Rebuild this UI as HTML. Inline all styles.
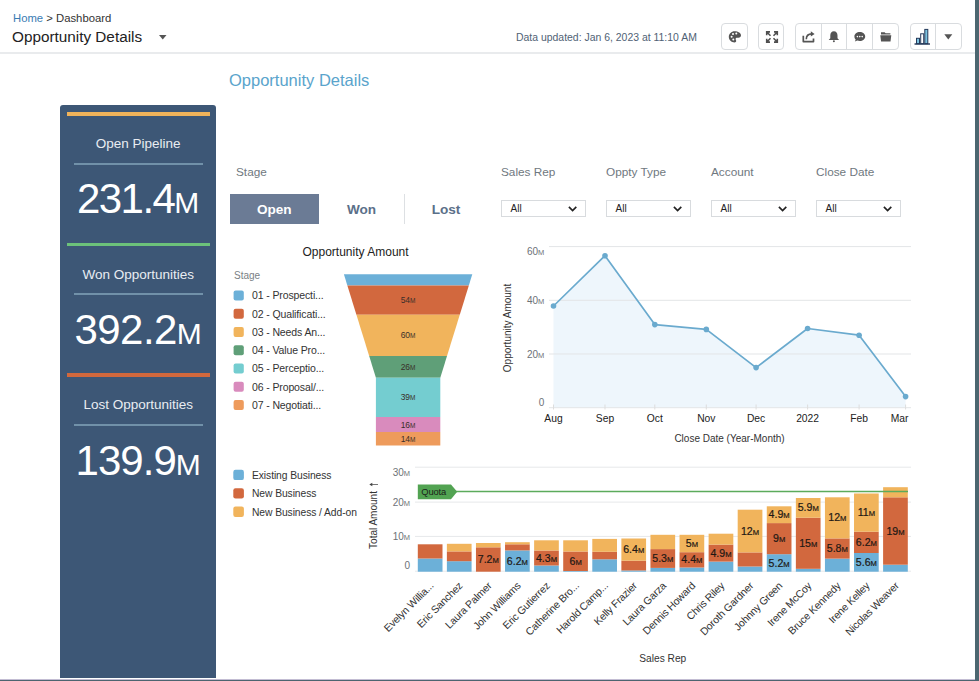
<!DOCTYPE html>
<html><head><meta charset="utf-8">
<style>
*{box-sizing:border-box;margin:0;padding:0}
html,body{width:979px;height:681px;overflow:hidden;background:#fff;font-family:"Liberation Sans",sans-serif}
.a{position:absolute;white-space:nowrap}
#rb{position:absolute;left:975px;top:0;width:4px;height:681px;background:#4c6670}
#bb{position:absolute;left:0;top:680px;width:979px;height:1px;background:#4d6470}
#bl{position:absolute;left:0;top:678.5px;width:975px;height:1.5px;background:#c3bdd3}
#hdrline{position:absolute;left:0;top:52px;width:975px;height:2px;background:#e9ebed}
.btn{position:absolute;top:23px;height:27px;border:1px solid #d9dcdf;border-radius:4px;background:#fff}
.sep{position:absolute;top:0;width:1px;height:25px;background:#d9dcdf}
#panel{position:absolute;left:60.2px;top:105px;width:156.2px;height:573px;background:#3d5776;border-radius:3px 3px 0 0}
.pbar{position:absolute;left:6.5px;width:143px;height:4px}
.ptitle{position:absolute;left:0;width:156px;text-align:center;color:#e9edf2;font-size:13.5px}
.pdiv{position:absolute;left:13.5px;width:129.5px;height:1.6px;background:#7191a9}
.pnum{position:absolute;left:0;width:156px;text-align:center;color:#fff;font-size:42px;letter-spacing:-1.3px}
.pnum span{font-size:30px;letter-spacing:0}
.flab{position:absolute;color:#6f7880;font-size:11.8px}
.dd{position:absolute;top:200px;width:85px;height:16.5px;border:1px solid #d8dbde;background:#fff}
.dd b{position:absolute;left:8.5px;top:1.6px;font-weight:normal;font-size:10px;color:#222}
.dd svg{position:absolute;left:66.3px;top:5.2px}
</style></head><body>
<div id="rb"></div>
<div id="bb"></div>
<div id="bl"></div>
<div id="hdrline"></div>

<!-- header -->
<div class="a" style="left:13px;top:12.3px;font-size:11.3px;color:#333"><span style="color:#3a7cb3">Home</span> &gt; Dashboard</div>
<div class="a" style="left:12px;top:28px;font-size:15.3px;color:#222">Opportunity Details</div>
<svg class="a" style="left:159px;top:34.5px" width="8" height="5"><path d="M0 0H7.5L3.75 4.6Z" fill="#555"/></svg>
<div class="a" style="left:516px;top:31.9px;font-size:10.45px;color:#506275">Data updated: Jan 6, 2023 at 11:10 AM</div>

<div class="btn" style="left:721px;width:27px"></div>
<div class="btn" style="left:757.5px;width:26.5px"></div>
<div class="btn" style="left:795px;width:104px">
  <div class="sep" style="left:24.8px"></div><div class="sep" style="left:50.2px"></div><div class="sep" style="left:75.8px"></div>
</div>
<div class="btn" style="left:909.5px;width:52px"><div class="sep" style="left:24.7px"></div></div>
<svg class="a" style="left:0;top:0" width="979" height="60">
 <!-- palette -->
 <path d="M734.6 31.2c-3.2 0-5.8 2.5-5.8 5.6s2.6 5.6 5.8 5.6c1 0 1.6-.6 1.6-1.4 0-.9-.6-1.2-.6-2 0-.8.7-1.3 1.5-1.3h1.3c1.6 0 2.6-1 2.6-2.4 0-2.3-2.8-4.1-6.4-4.1z" fill="#545454"/>
 <circle cx="731.6" cy="36.8" r="1" fill="#fff"/><circle cx="733" cy="34" r="1" fill="#fff"/><circle cx="736.3" cy="33.6" r="1" fill="#fff"/><circle cx="733.3" cy="39.6" r="1" fill="#fff"/>
 <!-- expand -->
 <g stroke="#4f4f4f" stroke-width="1.6" fill="none">
  <path d="M767.3 32.5L770.5 35.7M766.7 35.2V31.9H770M776.7 32.5L773.5 35.7M777.3 35.2V31.9H774M767.3 41.5L770.5 38.3M766.7 38.8V42.1H770M776.7 41.5L773.5 38.3M777.3 38.8V42.1H774"/>
 </g>
 <!-- share -->
 <path d="M803.3 35.8V41.6H813.5V38.6" stroke="#545454" stroke-width="1.7" fill="none" stroke-linejoin="round"/>
 <path d="M806.3 39.2c0-3.6 2.2-5.3 5.6-5.3" stroke="#545454" stroke-width="1.6" fill="none"/>
 <path d="M810.8 31.2L814.6 33.9L810.8 36.6Z" fill="#545454"/>
 <!-- bell -->
 <path d="M833.9 31.2c-2.3 0-3.6 1.8-3.6 4.2v2.8l-1.6 1.8h10.4l-1.6-1.8v-2.8c0-2.4-1.3-4.2-3.6-4.2z" fill="#545454"/>
 <circle cx="833.9" cy="41.2" r="1" fill="#545454"/>
 <!-- chat -->
 <path d="M859.8 32c-3 0-5.4 2-5.4 4.5 0 1.2.5 2.3 1.3 3.1l-.8 2 2.4-1c.8.3 1.6.5 2.5.5 3 0 5.4-2 5.4-4.6S862.8 32 859.8 32z" fill="#545454"/>
 <circle cx="857.4" cy="36.6" r=".8" fill="#fff"/><circle cx="859.8" cy="36.6" r=".8" fill="#fff"/><circle cx="862.2" cy="36.6" r=".8" fill="#fff"/>
 <!-- folder -->
 <path d="M881 32.2h3.6l1 1h4.8v1.2h-9.4z" fill="#545454"/>
 <path d="M880.3 35.2h11l-.8 6.3h-9.4z" fill="#545454"/>
 <!-- chart -->
 <rect x="916.5" y="38.3" width="3" height="5.4" fill="#7cc3e0" stroke="#24395a" stroke-width="1"/>
 <rect x="920.7" y="33.8" width="3" height="9.9" fill="#fff" stroke="#24395a" stroke-width="1"/>
 <rect x="924.8" y="29.4" width="3" height="14.3" fill="#7cc3e0" stroke="#24395a" stroke-width="1"/>
 <rect x="914.5" y="43.3" width="15.5" height="1.4" fill="#24395a"/>
 <path d="M944.3 34.2H952.3L948.3 39.6Z" fill="#555"/>
</svg>

<!-- title -->
<div class="a" style="left:229px;top:71px;font-size:16.5px;color:#5aa4cc">Opportunity Details</div>

<!-- left panel -->
<div id="panel">
  <div class="pbar" style="top:7px;background:#f0b35a"></div>
  <div class="ptitle" style="top:31px">Open Pipeline</div>
  <div class="pdiv" style="top:58.1px"></div>
  <div class="pnum" style="top:69.5px;letter-spacing:-1.55px">231.4<span>M</span></div>
  <div class="pbar" style="top:137.5px;background:#6cc27a;height:3.5px"></div>
  <div class="ptitle" style="top:161.7px">Won Opportunities</div>
  <div class="pdiv" style="top:188.1px"></div>
  <div class="pnum" style="top:200.5px;letter-spacing:-0.55px">392.2<span>M</span></div>
  <div class="pbar" style="top:268px;background:#d2683c;height:3.5px"></div>
  <div class="ptitle" style="top:292px">Lost Opportunities</div>
  <div class="pdiv" style="top:319.1px"></div>
  <div class="pnum" style="top:331.5px;letter-spacing:-0.95px">139.9<span>M</span></div>
</div>

<!-- filters -->
<div class="flab" style="left:236px;top:165px">Stage</div>
<div class="a" style="left:229.5px;top:194px;width:89.5px;height:30px;background:#6b7b95"></div>
<div class="a" style="left:229.5px;top:202px;width:89.5px;text-align:center;font-weight:bold;font-size:13.6px;color:#fff">Open</div>
<div class="a" style="left:319px;top:202px;width:85px;text-align:center;font-weight:bold;font-size:13.6px;color:#5b7089">Won</div>
<div class="a" style="left:404px;top:194px;width:1px;height:30px;background:#dde0e3"></div>
<div class="a" style="left:405px;top:202px;width:82px;text-align:center;font-weight:bold;font-size:13.6px;color:#5b7089">Lost</div>

<div class="flab" style="left:501px;top:165px">Sales Rep</div>
<div class="flab" style="left:606px;top:165px">Oppty Type</div>
<div class="flab" style="left:711px;top:165px">Account</div>
<div class="flab" style="left:816px;top:165px">Close Date</div>
<div class="dd" style="left:501px"><b>All</b><svg width="10" height="6"><path d="M0.9 0.9L4.6 4.5L8.3 0.9" stroke="#222" stroke-width="1.7" fill="none"/></svg></div>
<div class="dd" style="left:606px"><b>All</b><svg width="10" height="6"><path d="M0.9 0.9L4.6 4.5L8.3 0.9" stroke="#222" stroke-width="1.7" fill="none"/></svg></div>
<div class="dd" style="left:711px"><b>All</b><svg width="10" height="6"><path d="M0.9 0.9L4.6 4.5L8.3 0.9" stroke="#222" stroke-width="1.7" fill="none"/></svg></div>
<div class="dd" style="left:816px"><b>All</b><svg width="10" height="6"><path d="M0.9 0.9L4.6 4.5L8.3 0.9" stroke="#222" stroke-width="1.7" fill="none"/></svg></div>

<!-- CHARTS -->
<svg class="a" style="left:0;top:0" width="979" height="681" font-family="Liberation Sans, sans-serif">
<path d="M343.90 274.2L472.30 274.2L468.84 285.4L347.36 285.4Z" fill="#6cb0d8"/>
<path d="M347.36 285.4L468.84 285.4L459.78 314.7L356.42 314.7Z" fill="#d2683e"/>
<text x="408.1" y="303.0" font-size="8.5" text-anchor="middle" fill="#3a2f2a">54<tspan font-size="6.5">M</tspan></text>
<path d="M356.42 314.7L459.78 314.7L447.01 356L369.19 356Z" fill="#f1b45c"/>
<text x="408.1" y="338.4" font-size="8.5" text-anchor="middle" fill="#3a2f2a">60<tspan font-size="6.5">M</tspan></text>
<path d="M369.19 356L447.01 356L440.30 377.7L375.90 377.7Z" fill="#5f9f78"/>
<text x="408.1" y="369.9" font-size="8.5" text-anchor="middle" fill="#3a2f2a">26<tspan font-size="6.5">M</tspan></text>
<path d="M375.90 377.7L440.30 377.7L440.30 417L375.90 417Z" fill="#74cdd0"/>
<text x="408.1" y="400.4" font-size="8.5" text-anchor="middle" fill="#3a2f2a">39<tspan font-size="6.5">M</tspan></text>
<path d="M375.90 417L440.30 417L440.30 432L375.90 432Z" fill="#d98bbd"/>
<text x="408.1" y="427.5" font-size="8.5" text-anchor="middle" fill="#3a2f2a">16<tspan font-size="6.5">M</tspan></text>
<path d="M375.90 432L440.30 432L440.30 445.6L375.90 445.6Z" fill="#ee9b5c"/>
<text x="408.1" y="441.8" font-size="8.5" text-anchor="middle" fill="#3a2f2a">14<tspan font-size="6.5">M</tspan></text>
<text x="302.5" y="256" font-size="12" fill="#222">Opportunity Amount</text>
<text x="234" y="278.5" font-size="10" fill="#7a7f85">Stage</text>
<rect x="233.6" y="290.4" width="10.2" height="10" rx="2" fill="#6cb0d8"/>
<text x="252" y="299.2" font-size="10.5" letter-spacing="-0.12" fill="#333">01 - Prospecti...</text>
<rect x="233.6" y="308.7" width="10.2" height="10" rx="2" fill="#d2683e"/>
<text x="252" y="317.5" font-size="10.5" letter-spacing="-0.12" fill="#333">02 - Qualificati...</text>
<rect x="233.6" y="326.9" width="10.2" height="10" rx="2" fill="#f1b45c"/>
<text x="252" y="335.7" font-size="10.5" letter-spacing="-0.12" fill="#333">03 - Needs An...</text>
<rect x="233.6" y="345.2" width="10.2" height="10" rx="2" fill="#5f9f78"/>
<text x="252" y="354.0" font-size="10.5" letter-spacing="-0.12" fill="#333">04 - Value Pro...</text>
<rect x="233.6" y="363.5" width="10.2" height="10" rx="2" fill="#74cdd0"/>
<text x="252" y="372.3" font-size="10.5" letter-spacing="-0.12" fill="#333">05 - Perceptio...</text>
<rect x="233.6" y="381.8" width="10.2" height="10" rx="2" fill="#d98bbd"/>
<text x="252" y="390.6" font-size="10.5" letter-spacing="-0.12" fill="#333">06 - Proposal/...</text>
<rect x="233.6" y="400.0" width="10.2" height="10" rx="2" fill="#ee9b5c"/>
<text x="252" y="408.8" font-size="10.5" letter-spacing="-0.12" fill="#333">07 - Negotiati...</text>
<text x="544.3" y="254.6" font-size="10" text-anchor="end" fill="#6d7277">60<tspan font-size="7.5">M</tspan></text>
<text x="544.3" y="304.2" font-size="10" text-anchor="end" fill="#6d7277">40<tspan font-size="7.5">M</tspan></text>
<text x="544.3" y="357.9" font-size="10" text-anchor="end" fill="#6d7277">20<tspan font-size="7.5">M</tspan></text>
<text x="544.3" y="405.8" font-size="10" text-anchor="end" fill="#6d7277">0</text>
<polygon points="553.5,407.7 553.5,306.0 605.0,255.7 654.8,324.6 706.3,329.4 756.1,367.6 807.6,328.5 859.1,335.2 905.6,396.6 905.6,407.7" fill="#eef6fc"/>
<line x1="549" y1="246.6" x2="911" y2="246.6" stroke="#e3e5e7" stroke-width="1"/>
<line x1="549" y1="300.3" x2="911" y2="300.3" stroke="#e3e5e7" stroke-width="1"/>
<line x1="549" y1="354.0" x2="911" y2="354.0" stroke="#e3e5e7" stroke-width="1"/>
<line x1="549" y1="407.7" x2="911" y2="407.7" stroke="#e3e5e7" stroke-width="1"/>
<polyline points="553.5,306.0 605.0,255.7 654.8,324.6 706.3,329.4 756.1,367.6 807.6,328.5 859.1,335.2 905.6,396.6" fill="none" stroke="#6aaace" stroke-width="1.7" stroke-linejoin="round"/>
<circle cx="553.5" cy="306.0" r="2.8" fill="#6aaace"/>
<circle cx="605.0" cy="255.7" r="2.8" fill="#6aaace"/>
<circle cx="654.8" cy="324.6" r="2.8" fill="#6aaace"/>
<circle cx="706.3" cy="329.4" r="2.8" fill="#6aaace"/>
<circle cx="756.1" cy="367.6" r="2.8" fill="#6aaace"/>
<circle cx="807.6" cy="328.5" r="2.8" fill="#6aaace"/>
<circle cx="859.1" cy="335.2" r="2.8" fill="#6aaace"/>
<circle cx="905.6" cy="396.6" r="2.8" fill="#6aaace"/>
<line x1="553.5" y1="404.5" x2="553.5" y2="409.5" stroke="#ddd" stroke-width="1"/>
<text x="553.5" y="422" font-size="10.3" text-anchor="middle" fill="#222">Aug</text>
<line x1="605.0" y1="404.5" x2="605.0" y2="409.5" stroke="#ddd" stroke-width="1"/>
<text x="605.0" y="422" font-size="10.3" text-anchor="middle" fill="#222">Sep</text>
<line x1="654.8" y1="404.5" x2="654.8" y2="409.5" stroke="#ddd" stroke-width="1"/>
<text x="654.8" y="422" font-size="10.3" text-anchor="middle" fill="#222">Oct</text>
<line x1="706.3" y1="404.5" x2="706.3" y2="409.5" stroke="#ddd" stroke-width="1"/>
<text x="706.3" y="422" font-size="10.3" text-anchor="middle" fill="#222">Nov</text>
<line x1="756.1" y1="404.5" x2="756.1" y2="409.5" stroke="#ddd" stroke-width="1"/>
<text x="756.1" y="422" font-size="10.3" text-anchor="middle" fill="#222">Dec</text>
<line x1="807.6" y1="404.5" x2="807.6" y2="409.5" stroke="#ddd" stroke-width="1"/>
<text x="807.6" y="422" font-size="10.3" text-anchor="middle" fill="#222">2022</text>
<line x1="859.1" y1="404.5" x2="859.1" y2="409.5" stroke="#ddd" stroke-width="1"/>
<text x="859.1" y="422" font-size="10.3" text-anchor="middle" fill="#222">Feb</text>
<line x1="905.6" y1="404.5" x2="905.6" y2="409.5" stroke="#ddd" stroke-width="1"/>
<text x="899.5" y="422" font-size="10.3" text-anchor="middle" fill="#222">Mar</text>
<text x="729.5" y="441.5" font-size="10" text-anchor="middle" fill="#333">Close Date (Year-Month)</text>
<text transform="translate(510.5,328) rotate(-90)" font-size="10" text-anchor="middle" fill="#333">Opportunity Amount</text>
<line x1="415" y1="467.2" x2="911" y2="467.2" stroke="#e6e8ea" stroke-width="1"/>
<text x="410" y="475.7" font-size="10" text-anchor="end" fill="#6d7277">30<tspan font-size="7.5">M</tspan></text>
<line x1="415" y1="502.1" x2="911" y2="502.1" stroke="#e6e8ea" stroke-width="1"/>
<text x="410" y="506.0" font-size="10" text-anchor="end" fill="#6d7277">20<tspan font-size="7.5">M</tspan></text>
<line x1="415" y1="536.4" x2="911" y2="536.4" stroke="#e6e8ea" stroke-width="1"/>
<text x="410" y="540.3" font-size="10" text-anchor="end" fill="#6d7277">10<tspan font-size="7.5">M</tspan></text>
<line x1="415" y1="571.2" x2="911" y2="571.2" stroke="#e6e8ea" stroke-width="1"/>
<text x="410" y="569.3" font-size="10" text-anchor="end" fill="#6d7277">0</text>
<text transform="translate(376.5,520) rotate(-90)" font-size="10" text-anchor="middle" fill="#333">Total Amount</text>
<path d="M371 484.5H378" stroke="#666" stroke-width="0.9" fill="none"/><path d="M369.3 484.5L372.3 482.8V486.2Z" fill="#444"/>
<rect x="417.80" y="558.50" width="24.7" height="13.20" fill="#6cb0d8"/>
<rect x="417.80" y="544.30" width="24.7" height="14.20" fill="#d2683e"/>
<text transform="translate(434.2,586.4) rotate(-45)" font-size="10.5" letter-spacing="-0.2" text-anchor="end" fill="#333">Evelyn Willia...</text>
<rect x="446.88" y="561.20" width="24.7" height="10.50" fill="#6cb0d8"/>
<rect x="446.88" y="551.40" width="24.7" height="9.80" fill="#d2683e"/>
<rect x="446.88" y="543.80" width="24.7" height="7.60" fill="#f1b45c"/>
<text transform="translate(463.2,586.4) rotate(-45)" font-size="10.5" letter-spacing="-0.2" text-anchor="end" fill="#333">Eric Sanchez</text>
<rect x="475.96" y="547.30" width="24.7" height="24.40" fill="#d2683e"/>
<rect x="475.96" y="543.00" width="24.7" height="4.30" fill="#f1b45c"/>
<text x="488.3" y="563.0" font-size="10.6" text-anchor="middle" fill="#1e1814" stroke="#1e1814" stroke-width="0.2">7.2<tspan font-size="7.6">M</tspan></text>
<text transform="translate(492.3,586.4) rotate(-45)" font-size="10.5" letter-spacing="-0.2" text-anchor="end" fill="#333">Laura Palmer</text>
<rect x="505.04" y="550.40" width="24.7" height="21.30" fill="#6cb0d8"/>
<rect x="505.04" y="544.30" width="24.7" height="6.10" fill="#d2683e"/>
<rect x="505.04" y="542.20" width="24.7" height="2.10" fill="#f1b45c"/>
<text x="517.4" y="564.5" font-size="10.6" text-anchor="middle" fill="#1e1814" stroke="#1e1814" stroke-width="0.2">6.2<tspan font-size="7.6">M</tspan></text>
<text transform="translate(521.4,586.4) rotate(-45)" font-size="10.5" letter-spacing="-0.2" text-anchor="end" fill="#333">John Williams</text>
<rect x="534.12" y="565.50" width="24.7" height="6.20" fill="#6cb0d8"/>
<rect x="534.12" y="550.50" width="24.7" height="15.00" fill="#d2683e"/>
<rect x="534.12" y="540.30" width="24.7" height="10.20" fill="#f1b45c"/>
<text x="546.5" y="561.5" font-size="10.6" text-anchor="middle" fill="#1e1814" stroke="#1e1814" stroke-width="0.2">4.3<tspan font-size="7.6">M</tspan></text>
<text transform="translate(550.5,586.4) rotate(-45)" font-size="10.5" letter-spacing="-0.2" text-anchor="end" fill="#333">Eric Gutierrez</text>
<rect x="563.21" y="571.00" width="24.7" height="0.70" fill="#6cb0d8"/>
<rect x="563.21" y="551.50" width="24.7" height="19.50" fill="#d2683e"/>
<rect x="563.21" y="540.30" width="24.7" height="11.20" fill="#f1b45c"/>
<text x="575.6" y="564.8" font-size="10.6" text-anchor="middle" fill="#1e1814" stroke="#1e1814" stroke-width="0.2">6<tspan font-size="7.6">M</tspan></text>
<text transform="translate(579.6,586.4) rotate(-45)" font-size="10.5" letter-spacing="-0.2" text-anchor="end" fill="#333">Catherine Bro...</text>
<rect x="592.29" y="559.30" width="24.7" height="12.40" fill="#6cb0d8"/>
<rect x="592.29" y="551.80" width="24.7" height="7.50" fill="#d2683e"/>
<rect x="592.29" y="538.90" width="24.7" height="12.90" fill="#f1b45c"/>
<text transform="translate(608.6,586.4) rotate(-45)" font-size="10.5" letter-spacing="-0.2" text-anchor="end" fill="#333">Harold Camp...</text>
<rect x="621.37" y="570.50" width="24.7" height="1.20" fill="#6cb0d8"/>
<rect x="621.37" y="560.70" width="24.7" height="9.80" fill="#d2683e"/>
<rect x="621.37" y="538.50" width="24.7" height="22.20" fill="#f1b45c"/>
<text x="633.7" y="553.1" font-size="10.6" text-anchor="middle" fill="#1e1814" stroke="#1e1814" stroke-width="0.2">6.4<tspan font-size="7.6">M</tspan></text>
<text transform="translate(637.7,586.4) rotate(-45)" font-size="10.5" letter-spacing="-0.2" text-anchor="end" fill="#333">Kelly Frazier</text>
<rect x="650.45" y="567.90" width="24.7" height="3.80" fill="#6cb0d8"/>
<rect x="650.45" y="549.10" width="24.7" height="18.80" fill="#d2683e"/>
<rect x="650.45" y="534.80" width="24.7" height="14.30" fill="#f1b45c"/>
<text x="662.8" y="562.0" font-size="10.6" text-anchor="middle" fill="#1e1814" stroke="#1e1814" stroke-width="0.2">5.3<tspan font-size="7.6">M</tspan></text>
<text transform="translate(666.8,586.4) rotate(-45)" font-size="10.5" letter-spacing="-0.2" text-anchor="end" fill="#333">Laura Garza</text>
<rect x="679.53" y="567.50" width="24.7" height="4.20" fill="#6cb0d8"/>
<rect x="679.53" y="552.20" width="24.7" height="15.30" fill="#d2683e"/>
<rect x="679.53" y="534.80" width="24.7" height="17.40" fill="#f1b45c"/>
<text x="691.9" y="547.0" font-size="10.6" text-anchor="middle" fill="#1e1814" stroke="#1e1814" stroke-width="0.2">5<tspan font-size="7.6">M</tspan></text>
<text x="691.9" y="563.4" font-size="10.6" text-anchor="middle" fill="#1e1814" stroke="#1e1814" stroke-width="0.2">4.4<tspan font-size="7.6">M</tspan></text>
<text transform="translate(695.9,586.4) rotate(-45)" font-size="10.5" letter-spacing="-0.2" text-anchor="end" fill="#333">Dennis Howard</text>
<rect x="708.61" y="561.60" width="24.7" height="10.10" fill="#6cb0d8"/>
<rect x="708.61" y="544.60" width="24.7" height="17.00" fill="#d2683e"/>
<rect x="708.61" y="533.70" width="24.7" height="10.90" fill="#f1b45c"/>
<text x="721.0" y="556.6" font-size="10.6" text-anchor="middle" fill="#1e1814" stroke="#1e1814" stroke-width="0.2">4.9<tspan font-size="7.6">M</tspan></text>
<text transform="translate(725.0,586.4) rotate(-45)" font-size="10.5" letter-spacing="-0.2" text-anchor="end" fill="#333">Chris Riley</text>
<rect x="737.69" y="566.50" width="24.7" height="5.20" fill="#6cb0d8"/>
<rect x="737.69" y="552.40" width="24.7" height="14.10" fill="#d2683e"/>
<rect x="737.69" y="509.70" width="24.7" height="42.70" fill="#f1b45c"/>
<text x="750.0" y="534.5" font-size="10.6" text-anchor="middle" fill="#1e1814" stroke="#1e1814" stroke-width="0.2">12<tspan font-size="7.6">M</tspan></text>
<text transform="translate(754.0,586.4) rotate(-45)" font-size="10.5" letter-spacing="-0.2" text-anchor="end" fill="#333">Doroth Gardner</text>
<rect x="766.78" y="554.20" width="24.7" height="17.50" fill="#6cb0d8"/>
<rect x="766.78" y="523.10" width="24.7" height="31.10" fill="#d2683e"/>
<rect x="766.78" y="506.30" width="24.7" height="16.80" fill="#f1b45c"/>
<text x="779.1" y="518.2" font-size="10.6" text-anchor="middle" fill="#1e1814" stroke="#1e1814" stroke-width="0.2">4.9<tspan font-size="7.6">M</tspan></text>
<text x="779.1" y="542.2" font-size="10.6" text-anchor="middle" fill="#1e1814" stroke="#1e1814" stroke-width="0.2">9<tspan font-size="7.6">M</tspan></text>
<text x="779.1" y="566.5" font-size="10.6" text-anchor="middle" fill="#1e1814" stroke="#1e1814" stroke-width="0.2">5.2<tspan font-size="7.6">M</tspan></text>
<text transform="translate(783.1,586.4) rotate(-45)" font-size="10.5" letter-spacing="-0.2" text-anchor="end" fill="#333">Johnny Green</text>
<rect x="795.86" y="568.80" width="24.7" height="2.90" fill="#6cb0d8"/>
<rect x="795.86" y="517.70" width="24.7" height="51.10" fill="#d2683e"/>
<rect x="795.86" y="498.00" width="24.7" height="19.70" fill="#f1b45c"/>
<text x="808.2" y="511.4" font-size="10.6" text-anchor="middle" fill="#1e1814" stroke="#1e1814" stroke-width="0.2">5.9<tspan font-size="7.6">M</tspan></text>
<text x="808.2" y="546.8" font-size="10.6" text-anchor="middle" fill="#1e1814" stroke="#1e1814" stroke-width="0.2">15<tspan font-size="7.6">M</tspan></text>
<text transform="translate(812.2,586.4) rotate(-45)" font-size="10.5" letter-spacing="-0.2" text-anchor="end" fill="#333">Irene McCoy</text>
<rect x="824.94" y="558.60" width="24.7" height="13.10" fill="#6cb0d8"/>
<rect x="824.94" y="538.40" width="24.7" height="20.20" fill="#d2683e"/>
<rect x="824.94" y="497.30" width="24.7" height="41.10" fill="#f1b45c"/>
<text x="837.3" y="521.4" font-size="10.6" text-anchor="middle" fill="#1e1814" stroke="#1e1814" stroke-width="0.2">12<tspan font-size="7.6">M</tspan></text>
<text x="837.3" y="552.0" font-size="10.6" text-anchor="middle" fill="#1e1814" stroke="#1e1814" stroke-width="0.2">5.8<tspan font-size="7.6">M</tspan></text>
<text transform="translate(841.3,586.4) rotate(-45)" font-size="10.5" letter-spacing="-0.2" text-anchor="end" fill="#333">Bruce Kennedy</text>
<rect x="854.02" y="553.00" width="24.7" height="18.70" fill="#6cb0d8"/>
<rect x="854.02" y="531.70" width="24.7" height="21.30" fill="#d2683e"/>
<rect x="854.02" y="493.50" width="24.7" height="38.20" fill="#f1b45c"/>
<text x="866.4" y="516.1" font-size="10.6" text-anchor="middle" fill="#1e1814" stroke="#1e1814" stroke-width="0.2">11<tspan font-size="7.6">M</tspan></text>
<text x="866.4" y="545.9" font-size="10.6" text-anchor="middle" fill="#1e1814" stroke="#1e1814" stroke-width="0.2">6.2<tspan font-size="7.6">M</tspan></text>
<text x="866.4" y="565.9" font-size="10.6" text-anchor="middle" fill="#1e1814" stroke="#1e1814" stroke-width="0.2">5.6<tspan font-size="7.6">M</tspan></text>
<text transform="translate(870.4,586.4) rotate(-45)" font-size="10.5" letter-spacing="-0.2" text-anchor="end" fill="#333">Irene Kelley</text>
<rect x="883.10" y="564.70" width="24.7" height="7.00" fill="#6cb0d8"/>
<rect x="883.10" y="497.30" width="24.7" height="67.40" fill="#d2683e"/>
<rect x="883.10" y="487.20" width="24.7" height="10.10" fill="#f1b45c"/>
<text x="895.5" y="534.5" font-size="10.6" text-anchor="middle" fill="#1e1814" stroke="#1e1814" stroke-width="0.2">19<tspan font-size="7.6">M</tspan></text>
<text transform="translate(899.5,586.4) rotate(-45)" font-size="10.5" letter-spacing="-0.2" text-anchor="end" fill="#333">Nicolas Weaver</text>
<line x1="440" y1="491.6" x2="908" y2="491.6" stroke="#5cab5c" stroke-width="1.5"/>
<path d="M417.8 484.5H451L457.2 491.8L451 499.2H417.8Z" fill="#52a352"/>
<text x="421.2" y="495.3" font-size="9.4" letter-spacing="-0.1" fill="#1a231a">Quota</text>
<text x="662.8" y="662.4" font-size="10.2" text-anchor="middle" fill="#333">Sales Rep</text>
<rect x="233.3" y="469.8" width="10.6" height="10.3" rx="2.2" fill="#6cb0d8"/>
<text x="252" y="478.9" font-size="10.3" letter-spacing="-0.08" fill="#333">Existing Business</text>
<rect x="233.3" y="488.2" width="10.6" height="10.3" rx="2.2" fill="#d2683e"/>
<text x="252" y="497.3" font-size="10.3" letter-spacing="-0.08" fill="#333">New Business</text>
<rect x="233.3" y="506.6" width="10.6" height="10.3" rx="2.2" fill="#f1b45c"/>
<text x="252" y="515.7" font-size="10.3" letter-spacing="-0.08" fill="#333">New Business / Add-on</text>
</svg>
</body></html>
